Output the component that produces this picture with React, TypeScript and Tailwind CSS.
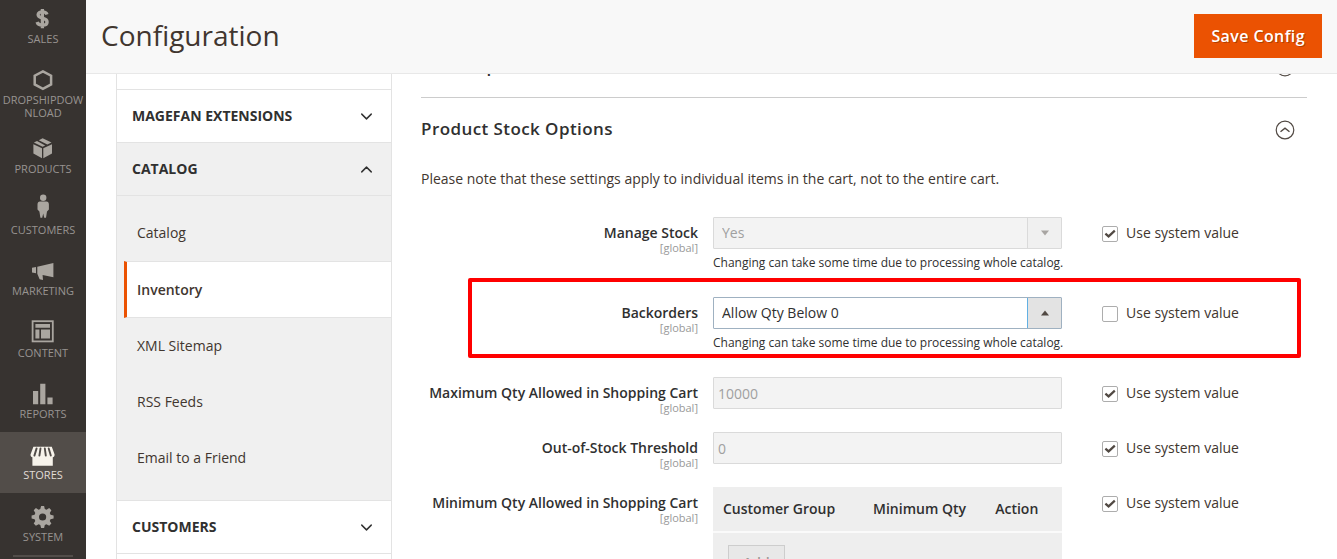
import { useState } from 'react';
import type { ReactNode } from 'react';
import { ChevronDown, ChevronUp } from 'lucide-react';

type MenuItem = { label: string; icon: ReactNode; active?: boolean };

const menuItems: MenuItem[] = [
  {
    label: 'Sales',
    icon: (
      <path
        d="M18 11.4C17.4 9.6 15.8 8.9 13.4 8.9C10.8 8.9 9.1 9.9 9.1 11.8C9.1 16.3 18.1 13.9 18.1 18.9C18.1 21 16.2 22.1 13.5 22.1C10.7 22.1 8.7 21.2 8.1 19M13.4 6V25.2"
        fill="none"
        stroke="currentColor"
        strokeWidth="3.3"
      />
    ),
  },
  {
    label: 'Dropshipdownload',
    icon: <path d="M13.9 7.3L22.1 11.7V20.4L13.9 24.8L5.7 20.4V11.7Z" fill="none" stroke="currentColor" strokeWidth="2.5" />,
  },
  {
    label: 'Products',
    icon: (
      <>
        <path d="M4.4 11.2L13 15.2V25.2L4.4 20.6Z" />
        <path d="M23 11.2L14.3 15.2V25.2L23 20.6Z" />
        <path d="M4.9 9.6L8 8.1L16.2 12.4L13.6 13.7Z" />
        <path d="M9.8 7.2L13.6 5.2L22.5 9.6L18.3 11.5Z" />
      </>
    ),
  },
  {
    label: 'Customers',
    icon: (
      <>
        <circle cx="14.2" cy="3.7" r="3.2" />
        <path d="M11 7.5H17.4C19 7.5 19.9 8.6 19.9 10.4V15.6L18 17.6L17 23.8H15.2L14.2 19.6L13.2 23.8H11.4L10.4 17.6L8.5 15.6V10.4C8.5 8.6 9.4 7.5 11 7.5Z" />
      </>
    ),
  },
  {
    label: 'Marketing',
    icon: (
      <>
        <path d="M8.3 11.8L24.4 8V22.3L13.6 20L14 25L10.6 24.2L8.3 18.8Z" />
        <path d="M3 12.8L7 12V18.2L3 17.4Z" />
      </>
    ),
  },
  {
    label: 'Content',
    icon: (
      <>
        <rect x="3.6" y="4.2" width="20.2" height="20.2" fill="none" stroke="currentColor" strokeWidth="1.8" />
        <path d="M6.4 7H21V10.8H6.4ZM6.4 12.4H10.4V21.6H6.4ZM12 12.4H21V21.6H12Z" />
      </>
    ),
  },
  {
    label: 'Reports',
    icon: <path d="M4 13H9.2V26.2H4ZM11.2 5.8H16.4V26.2H11.2ZM18.4 19.4H23.6V26.2H18.4Z" />,
  },
  {
    label: 'Stores',
    active: true,
    icon: (
      <>
        <path d="M4.4 7.8H22.8L25.6 15.4C25.6 17.2 24.8 18 23.8 18.2V26.8H3.4V18.2C2.3 18 1.5 17.2 1.5 15.4Z" />
        <path
          d="M7.6 9.4L5.4 16.6M11.5 9.4L10.4 16.6M15.8 9.4L16.8 16.6M19.7 9.4L21.8 16.6"
          stroke="#524d49"
          strokeWidth="1.9"
          strokeLinecap="round"
        />
      </>
    ),
  },
  {
    label: 'System',
    icon: (
      <path
        fillRule="evenodd"
        d="M12.1 5H15.1L15.8 8L17.5 8.7L20.2 7.1L22.4 9.3L20.8 12L21.5 13.7L24.6 14.5V17.5L21.5 18.2L20.8 19.9L22.4 22.6L20.2 24.8L17.5 23.2L15.8 23.9L15.1 27H12.1L11.3 23.9L9.6 23.2L6.9 24.8L4.7 22.6L6.3 19.9L5.6 18.2L2.6 17.5V14.5L5.6 13.7L6.3 12L4.7 9.3L6.9 7.1L9.6 8.7L11.3 8ZM13.6 12.4A3.6 3.6 0 1 0 13.6 19.6A3.6 3.6 0 1 0 13.6 12.4Z"
      />
    ),
  },
];

const catalogLinks = ['Catalog', 'Inventory', 'XML Sitemap', 'RSS Feeds', 'Email to a Friend'];

const SideMenu = () => (
  <nav className="flex w-[86px] shrink-0 flex-col overflow-hidden bg-[#373330]">
    <div className="-mt-1 flex flex-1 flex-col justify-between pb-0.5">
      {menuItems.map((item) => (
        <a
          key={item.label}
          href="#"
          className={`flex min-h-[61px] flex-col items-center px-px pt-[7px] pb-[6px] ${
            item.active ? 'bg-[#524d49] text-[#f7f3eb]' : 'text-[#aaa6a0]'
          }`}
        >
          <svg viewBox="0 0 28 28" className="size-7 shrink-0" fill="currentColor" aria-hidden="true">
            {item.icon}
          </svg>
          <span
            className={`mt-px w-full text-center text-[11px] leading-[13px] break-all uppercase ${
              item.active ? 'text-[#e0dcd6]' : 'text-[#989390]'
            }`}
          >
            {item.label}
          </span>
        </a>
      ))}
      <hr className="mx-[13px] border-t-2 border-[#524d49]" />
    </div>
  </nav>
);

const TabHeader = ({ title, open = false }: { title: string; open?: boolean }) => (
  <button
    type="button"
    aria-expanded={open}
    className={`flex h-[53px] w-full shrink-0 items-center justify-between border-b border-[#e3e3e3] pr-[15px] pl-[15px] text-left text-sm font-bold text-[#303030] uppercase ${
      open ? 'bg-[#f0f0f0]' : 'bg-white'
    }`}
  >
    {title}
    {open ? <ChevronUp className="size-[19px]" strokeWidth={1.8} /> : <ChevronDown className="size-[19px]" strokeWidth={1.8} />}
  </button>
);

const ConfigTabs = () => (
  <nav className="w-[276px] shrink-0 border-x border-[#e3e3e3]">
    <div className="h-4 border-b border-[#e3e3e3]" />
    <TabHeader title="Magefan Extensions" />
    <TabHeader title="Catalog" open />
    <ul className="border-b border-[#e3e3e3] bg-[#f0f0f0] pt-[9px] pb-3.5">
      {catalogLinks.map((link) => (
        <li key={link}>
          {link === 'Inventory' ? (
            <a
              href="#"
              aria-current="page"
              className="ml-[7px] flex h-[57px] items-center border-y border-l-3 border-y-[#e3e3e3] border-l-[#eb5202] bg-white pl-2.5 font-semibold"
            >
              {link}
            </a>
          ) : (
            <a href="#" className="flex h-14 items-center pl-5">
              {link}
            </a>
          )}
        </li>
      ))}
    </ul>
    <TabHeader title="Customers" />
  </nav>
);

const SectionHeading = ({ title }: { title: string }) => (
  <button type="button" className="flex h-[62px] w-full items-center justify-between pr-3 text-left">
    <span className="text-[17px] font-semibold tracking-wide text-[#303030]">{title}</span>
    <svg viewBox="0 0 20 20" className="mt-0.5 size-5" fill="none" stroke="#514943" aria-hidden="true">
      <circle cx="10" cy="10" r="8.8" strokeWidth="1.2" />
      <path d="M5.5 11.8L10 8.2L14.5 11.8" strokeWidth="1.4" />
    </svg>
  </button>
);

const SystemValue = ({ id, checked, onChange }: { id: string; checked: boolean; onChange: (v: boolean) => void }) => (
  <div className="flex h-8 items-center gap-2 pl-10">
    <span className="relative mt-0.5 flex">
      <input
        id={`${id}-inherit`}
        type="checkbox"
        checked={checked}
        onChange={(e) => onChange(e.target.checked)}
        className="size-4 appearance-none rounded-xs border border-[#adadad] bg-white"
      />
      {checked && (
        <svg viewBox="0 0 16 16" className="pointer-events-none absolute inset-0 size-4" fill="none" aria-hidden="true">
          <path d="M3.4 7.6L6.6 10.4L12.8 4.6" stroke="#514943" strokeWidth="2.2" />
        </svg>
      )}
    </span>
    <label htmlFor={`${id}-inherit`}>Use system value</label>
  </div>
);

type FieldProps = {
  id: string;
  label: string;
  note?: string;
  highlighted?: boolean;
  inherit?: boolean;
  children: (disabled: boolean) => ReactNode;
};

const Field = ({ id, label, note, highlighted, inherit = true, children }: FieldProps) => {
  const [useSystem, setUseSystem] = useState(inherit);

  return (
    <div className="relative mb-[18px] grid grid-cols-[292fr_349fr_245fr]">
      <div className="flex flex-col items-end pt-[7px] pr-[15px] text-right">
        <label htmlFor={id} className="leading-[18px] font-semibold text-[#303030]">
          {label}
        </label>
        <span className="text-[11px] leading-3 text-[#999]">[global]</span>
      </div>
      <div className="min-w-0">
        {children(useSystem)}
        {note && <p className="pt-1 pb-1.5 text-xs leading-5 whitespace-nowrap text-[#303030]">{note}</p>}
      </div>
      <SystemValue id={id} checked={useSystem} onChange={setUseSystem} />
      {highlighted && (
        <div className="pointer-events-none absolute -top-[19px] right-1.5 bottom-px left-[47px] rounded-xs border-4 border-[#ff0000]" />
      )}
    </div>
  );
};

const SelectBox = ({ id, options, disabled }: { id: string; options: string[]; disabled: boolean }) => (
  <div className="relative">
    <select
      id={id}
      disabled={disabled}
      className={`block h-8 w-full appearance-none rounded-[1px] border pr-10 pl-2 ${
        disabled ? 'border-[#dadada] bg-[#f3f3f3] text-[#a0a0a0] opacity-100' : 'border-[#9fb1c1] bg-white text-[#303030]'
      }`}
    >
      {options.map((option) => (
        <option key={option}>{option}</option>
      ))}
    </select>
    <span
      className={`pointer-events-none absolute inset-y-px right-px flex w-[34px] items-center justify-center border-l ${
        disabled ? 'border-[#dadada] bg-[#f0f0f0] text-[#a8a5a2]' : 'border-[#62b0e3] bg-[#e3e3e3] text-[#514943]'
      }`}
    >
      <svg viewBox="0 0 8 6" className="h-1.5 w-2" fill="currentColor" aria-hidden="true">
        {disabled ? <path d="M0 0.5H8L4 5.5Z" /> : <path d="M0 5.5H8L4 0.5Z" />}
      </svg>
    </span>
  </div>
);

const TextBox = ({ id, value, disabled }: { id: string; value: string; disabled: boolean }) => (
  <input
    id={id}
    type="text"
    defaultValue={value}
    disabled={disabled}
    className="block h-8 w-full rounded-[1px] border border-[#adadad] bg-white px-1 disabled:border-[#dadada] disabled:bg-[#f3f3f3] disabled:text-[#a0a0a0]"
  />
);

const QtyTable = ({ id, disabled }: { id: string; disabled: boolean }) => (
  <table id={id} className="w-full bg-[#eee] text-left">
    <thead>
      <tr className="h-[45px] border-b-2 border-[#fafafa] text-[#303030]">
        <th className="w-[43%] pl-2.5 font-semibold">Customer Group</th>
        <th className="w-[35%] pl-2.5 font-semibold">Minimum Qty</th>
        <th className="pl-2.5 font-semibold">Action</th>
      </tr>
    </thead>
    <tbody>
      <tr>
        <td colSpan={3} className="px-[15px] py-3">
          <button
            type="button"
            disabled={disabled}
            className="h-9 border border-[#adadad] bg-[#e3e3e3] px-3.5 font-semibold text-[#514943] disabled:opacity-50"
          >
            Add
          </button>
        </td>
      </tr>
    </tbody>
  </table>
);

const catalogNote = 'Changing can take some time due to processing whole catalog.';

const App = () => (
  <div className="flex h-screen overflow-hidden bg-white font-['Open_Sans','Noto_Sans',sans-serif] text-sm text-[#41362f]">
    <SideMenu />

    <div className="flex min-w-0 flex-1 flex-col">
      <header className="flex h-[74px] shrink-0 items-center justify-between border-b border-[#e8e8e8] bg-[#f8f8f8] px-[15px] pb-0.5">
        <h1 className="pb-0.5 text-[28px] text-[#41362f]">Configuration</h1>
        <button
          type="button"
          className="h-11 bg-[#eb5202] px-[17px] text-base font-semibold tracking-wide text-white text-shadow-[1px_1px_0_rgb(0_0_0/0.25)]"
        >
          Save Config
        </button>
      </header>

      <div className="flex min-h-0 flex-1 overflow-hidden px-[30px]">
        <ConfigTabs />

        <main className="min-w-0 flex-1 pl-[29px]">
          {/* Previous section is scrolled under the header */}
          <div className="-mt-[39px] border-b border-[#ccc]">
            <SectionHeading title="Stock Options" />
          </div>

          <section>
            <SectionHeading title="Product Stock Options" />
            <p className="pt-[9px] pb-7 leading-5">
              Please note that these settings apply to individual items in the cart, not to the entire cart.
            </p>

            <Field id="manage-stock" label="Manage Stock" note={catalogNote}>
              {(disabled) => <SelectBox id="manage-stock" options={['Yes', 'No']} disabled={disabled} />}
            </Field>
            <Field id="backorders" label="Backorders" note={catalogNote} inherit={false} highlighted>
              {(disabled) => (
                <SelectBox id="backorders" options={['Allow Qty Below 0', 'No Backorders']} disabled={disabled} />
              )}
            </Field>
            <Field id="max-qty" label="Maximum Qty Allowed in Shopping Cart">
              {(disabled) => <TextBox id="max-qty" value="10000" disabled={disabled} />}
            </Field>
            <Field id="threshold" label="Out-of-Stock Threshold">
              {(disabled) => <TextBox id="threshold" value="0" disabled={disabled} />}
            </Field>
            <Field id="min-qty" label="Minimum Qty Allowed in Shopping Cart">
              {(disabled) => <QtyTable id="min-qty" disabled={disabled} />}
            </Field>
          </section>
        </main>
      </div>
    </div>
  </div>
);

export default App;
